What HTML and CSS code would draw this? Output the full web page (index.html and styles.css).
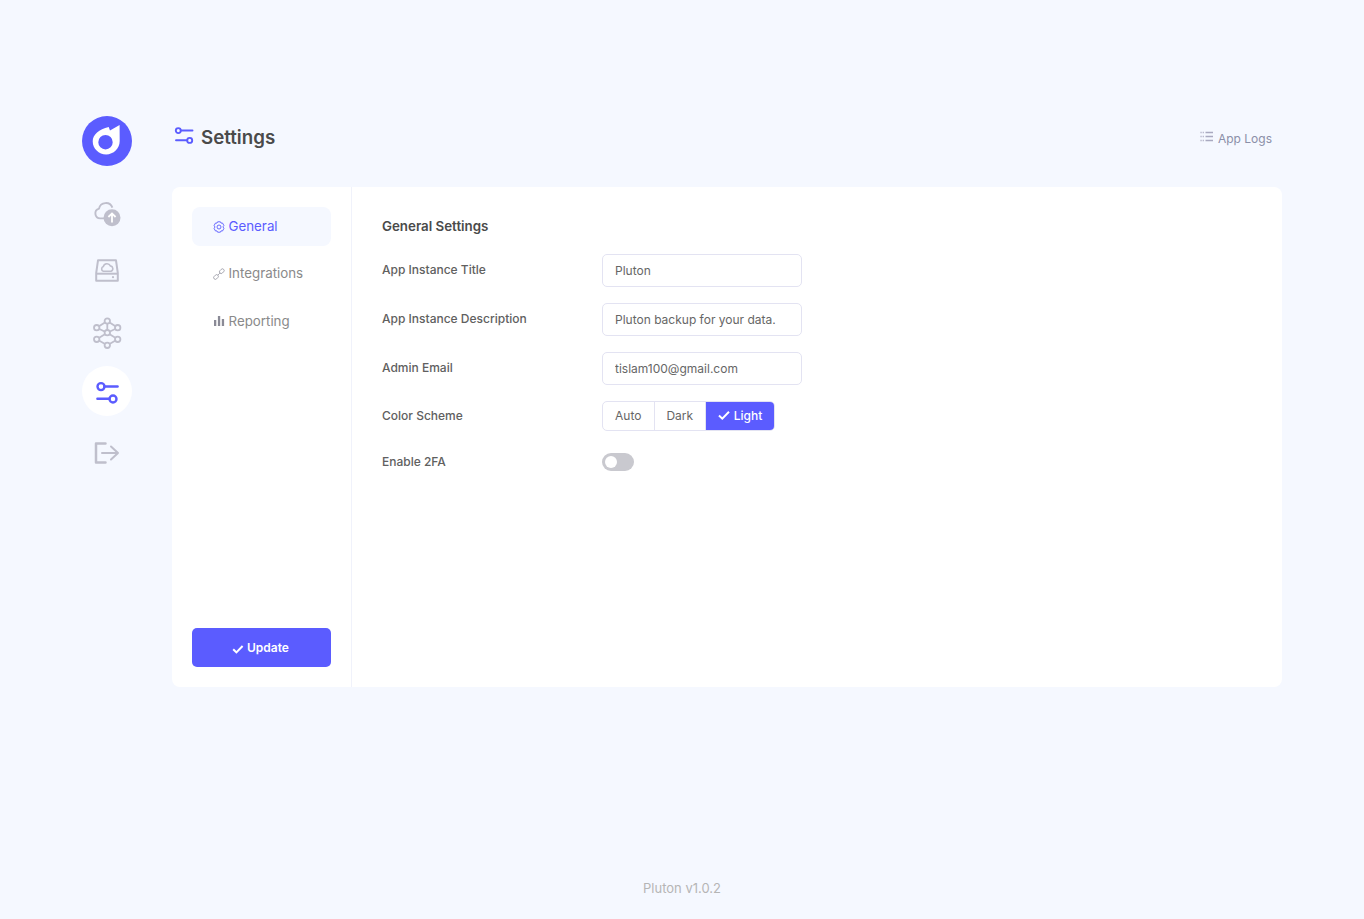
FILE: index.html
```html
<!DOCTYPE html>
<html lang="en">
<head>
<meta charset="utf-8">
<title>Pluton Settings</title>
<link rel="stylesheet" href="styles.css">
</head>
<body>
<div class="page">
  <div class="app">
    <aside class="sidebar">
      <div class="logo">
        <svg viewBox="0 0 50 50" width="50" height="50"><circle cx="25" cy="25" r="25" fill="#5b5cff"/><path fill="#fff" fill-rule="evenodd" d="M26.7 11 L28 14.6 L37.6 9 L37.7 25 C37.7 32.5 31.5 38.4 24.2 38.4 C16.8 38.4 10.7 32.5 10.7 25.2 C10.7 18.5 17 13.5 26.7 11 Z M23.5 19 A7.2 7.2 0 1 0 23.5 33.4 A7.2 7.2 0 1 0 23.5 19 Z"/></svg>
      </div>
      <nav class="side-nav">
        <a class="side-item">
          <svg viewBox="0 0 30 30" width="30" height="30" fill="none" stroke="#bfbfcc" stroke-width="1.9"><path d="M15 22.4 H8.2 A5 5 0 0 1 7 12.6 A7 7 0 0 1 20.4 11.6"/><circle cx="20" cy="21.7" r="8.5" fill="#bfbfcc" stroke="none"/><path d="M20 26.4 V17.6 M16.4 21 L20 17.4 L23.6 21" stroke="#fff" stroke-width="1.8"/></svg>
        </a>
        <a class="side-item">
          <svg viewBox="0 0 30 30" width="30" height="30" fill="none" stroke="#bfbfcc" stroke-width="2"><path d="M6 4.3 H24 L25.8 17 V24.8 H4.2 V17 Z" stroke-linejoin="round"/><path d="M4.2 17.7 H25.8"/><circle cx="21" cy="21.2" r="1.1" fill="#bfbfcc" stroke="none"/><path stroke-width="1.6" d="M11.3 15.3 A2.5 2.5 0 0 1 11.3 10.6 A3.8 3.8 0 0 1 18.4 9.9 A2.8 2.8 0 0 1 19 15.3 Z"/></svg>
        </a>
        <a class="side-item">
          <svg viewBox="0 0 30 30" width="30" height="30" fill="none" stroke="#bfbfcc" stroke-width="1.8"><path d="M15.3 5 L4.7 11.7 L15.3 16.7 L25.7 11.7 Z M15.3 5 V16.7 M4.7 23.3 L15.3 16.7 L25.7 23.3 M4.7 23.3 L15.3 29.3 M25.7 23.3 L15.3 29.3"/><g fill="#f5f8ff"><circle cx="15.3" cy="5" r="2.7"/><circle cx="4.7" cy="11.7" r="2.7"/><circle cx="25.7" cy="11.7" r="2.7"/><circle cx="15.3" cy="16.7" r="2.7"/><circle cx="4.7" cy="23.3" r="2.7"/><circle cx="25.7" cy="23.3" r="2.7"/><circle cx="15.3" cy="29.3" r="2.7"/></g></svg>
        </a>
        <a class="side-item active">
          <svg viewBox="0 0 30 30" width="30" height="30" fill="none" stroke="#5b5cff" stroke-width="2.4" stroke-linecap="round"><circle cx="9" cy="10.6" r="3.5"/><path d="M12.5 10.5 H25.6"/><circle cx="21" cy="23" r="3.5"/><path d="M5.4 22.8 H17.5"/></svg>
        </a>
        <a class="side-item">
          <svg viewBox="0 0 30 30" width="30" height="30" fill="none" stroke="#bfbfcc" stroke-width="2.5" stroke-linecap="round" stroke-linejoin="round"><path d="M13.5 7.5 H4 V26.5 H13.5"/><path d="M10 17 H26 M19 10.5 L26 17 L19 23.5" stroke-width="2"/></svg>
        </a>
      </nav>
    </aside>
    <main class="main">
      <header class="header">
        <h1 class="title">
          <svg viewBox="0 0 20 20" width="20" height="20" fill="none" stroke="#5b5cff" stroke-width="1.9" stroke-linecap="round"><circle cx="4.3" cy="4.6" r="2.5"/><path d="M6.8 4.5 H18.5"/><circle cx="15.7" cy="14.4" r="2.5"/><path d="M2 14.3 H13.2"/></svg>
          <span>Settings</span>
        </h1>
        <a class="logs">
          <svg viewBox="0 0 14 12" width="14" height="12" fill="none" stroke="#a9a9c0"><path d="M.5 1.5 H4 M.5 5.5 H4 M.5 9.5 H4" stroke-width="1.4" stroke-dasharray="1.1 1.1"/><path d="M5.5 1.5 H13 M5.5 5.5 H13 M5.5 9.5 H13" stroke-width="1.4"/></svg>
          <span>App Logs</span>
        </a>
      </header>
      <section class="card">
        <div class="tabs">
          <div class="tab-list">
            <a class="tab selected">
              <svg viewBox="0 0 12 12" width="12" height="12" fill="none" stroke="#5b5cff" stroke-width=".9" stroke-linejoin="round"><path d="M4.6 .8 H7.4 L8 2.1 L9.5 2 L10.9 4.5 L10 5.8 L10.9 7.5 L9.5 10 L8 9.9 L7.4 11.2 H4.6 L4 9.9 L2.5 10 L1.1 7.5 L2 6 L1.1 4.5 L2.5 2 L4 2.1 Z"/><circle cx="6" cy="6" r="2"/></svg>
              <span>General</span>
            </a>
            <a class="tab">
              <svg viewBox="0 0 12 12" width="12" height="12" fill="none" stroke="#a0a0aa" stroke-width=".9"><rect x="-2.6" y="-1.7" width="5.2" height="3.4" rx="1.7" transform="translate(3 9) rotate(-45)"/><rect x="-2.6" y="-1.7" width="5.2" height="3.4" rx="1.7" transform="translate(8.8 3.2) rotate(-45)"/><path d="M5 7 L6.9 5.1"/></svg>
              <span>Integrations</span>
            </a>
            <a class="tab">
              <svg viewBox="0 0 12 12" width="12" height="12" fill="#8a8a96"><rect x="1" y="5" width="2.3" height="6"/><rect x="4.9" y="1" width="2.3" height="10"/><rect x="8.8" y="4" width="2.3" height="7"/></svg>
              <span>Reporting</span>
            </a>
          </div>
          <button class="update" type="button">
            <svg viewBox="0 0 12 12" width="12" height="12" fill="none" stroke="#fff" stroke-width="2"><path d="M1.2 6.2 L4.4 9.4 L10.6 3"/></svg>
            <span>Update</span>
          </button>
        </div>
        <div class="panel">
          <h2 class="panel-title">General Settings</h2>
          <div class="row">
            <label class="label">App Instance Title</label>
            <input class="field" type="text" value="Pluton">
          </div>
          <div class="row">
            <label class="label">App Instance Description</label>
            <input class="field" type="text" value="Pluton backup for your data.">
          </div>
          <div class="row">
            <label class="label">Admin Email</label>
            <input class="field" type="text" value="tislam100@gmail.com">
          </div>
          <div class="row seg-row">
            <label class="label">Color Scheme</label>
            <div class="segments">
              <span class="seg">Auto</span>
              <span class="seg">Dark</span>
              <span class="seg on"><svg viewBox="0 0 12 12" width="12" height="12" fill="none" stroke="#fff" stroke-width="2"><path d="M1 6.5 L4.3 9.7 L11 2.8"/></svg>Light</span>
            </div>
          </div>
          <div class="row toggle-row">
            <label class="label">Enable 2FA</label>
            <span class="toggle"><span class="knob"></span></span>
          </div>
        </div>
      </section>
    </main>
  </div>
  <footer class="footer">Pluton v1.0.2</footer>
</div>
</body>
</html>
```
FILE: styles.css
```css
* { box-sizing: border-box; }
html, body { margin: 0; height: 100%; }
body {
  background: #f5f8ff;
  font-family: Inter, "Liberation Sans", sans-serif;
  color: #555;
}
.page {
  min-height: 919px;
  display: flex;
  flex-direction: column;
  padding: 116px 82px 23px;
}
.app { display: flex; gap: 40px; }
.sidebar { width: 50px; flex: none; }
.logo { height: 50px; }
.logo svg, .side-item svg { display: block; overflow: visible; }
.side-nav {
  margin-top: 20px;
  display: flex;
  flex-direction: column;
  gap: 10px;
}
.side-item {
  width: 50px;
  height: 50px;
  border-radius: 50%;
  display: flex;
  align-items: center;
  justify-content: center;
}
.side-item.active { background: #fff; }
.main { width: 1110px; flex: none; }
.header {
  height: 42px;
  margin-bottom: 29px;
  display: flex;
  align-items: center;
  justify-content: space-between;
  padding: 0 10px 0 2px;
}
.title {
  margin: 0;
  display: flex;
  align-items: center;
  gap: 7px;
  font-size: 18.72px;
  font-weight: 600;
  color: #4a4a4a;
}
.title svg { margin-top: -3px; }
.logs {
  display: flex;
  align-items: center;
  gap: 4px;
  font-size: 12px;
  color: #8b8fa8;
  margin-top: 3px;
}
.logs svg { margin-top: -3px; }
.card {
  height: 500px;
  background: #fff;
  border-radius: 8px;
  display: flex;
}
.tabs {
  width: 180px;
  flex: none;
  border-right: 1px solid #f0f2fb;
  padding: 20px;
  display: flex;
  flex-direction: column;
  justify-content: space-between;
}
.tab-list { display: flex; flex-direction: column; gap: 8.25px; }
.tab {
  height: 39px;
  border-radius: 8px;
  display: flex;
  align-items: center;
  gap: 3.5px;
  padding-left: 21px;
  font-size: 13.33px;
  color: #8a8a8a;
}
.tab.selected { background: #f5f8ff; color: #5b5cff; }
.tab span { margin-top: -1px; }
.update {
  height: 39px;
  width: 139px;
  border: 0;
  border-radius: 5px;
  background: #5b5cff;
  color: #fff;
  font: 600 12px Inter, "Liberation Sans", sans-serif;
  display: flex;
  align-items: center;
  justify-content: center;
  gap: 3px;
}
.update svg { margin-top: 2px; margin-left: -2px; }
.panel { flex: 1; padding: 30px; }
.panel-title {
  margin: 0 0 18px;
  font-size: 13.33px;
  line-height: 19px;
  font-weight: 600;
  color: #4a4a4a;
}
.row {
  display: flex;
  align-items: center;
  height: 33px;
  margin-bottom: 16px;
}
.seg-row { height: 30px; margin-bottom: 22px; }
.label {
  width: 220px;
  flex: none;
  font-size: 12px;
  font-weight: 500;
  color: #606060;
  margin-top: -3px;
}
.seg-row .label { margin-top: -1px; }
.field {
  width: 200px;
  height: 33px;
  border: 1px solid #e3e3f2;
  border-radius: 5px;
  padding: 0 12px;
  background: #fff;
  font: 12px Inter, "Liberation Sans", sans-serif;
  color: #666;
  outline: 0;
}
.segments {
  display: flex;
  width: 173px;
  height: 30px;
  border: 1px solid #e3e3f2;
  border-radius: 5px;
  overflow: hidden;
}
.seg {
  display: flex;
  align-items: center;
  gap: 4px;
  padding: 0 0 2px;
  justify-content: center;
  width: 51.5px;
  flex: none;
  font-size: 12px;
  color: #666;
  border-right: 1px solid #e3e3f2;
}
.seg.on { width: 68px; background: #5b5cff; color: #fff; font-weight: 500; border-right: 0; }
.toggle-row { height: 18px; }
.toggle-row .label { margin-top: -2px; }
.toggle {
  width: 32px;
  height: 18px;
  border-radius: 9px;
  background: #c9c9cf;
  padding: 3px;
}
.knob {
  display: block;
  width: 12px;
  height: 12px;
  border-radius: 50%;
  background: #fff;
}
.footer {
  margin-top: auto;
  text-align: center;
  font-size: 13px;
  color: #b5b5b5;
}
```
